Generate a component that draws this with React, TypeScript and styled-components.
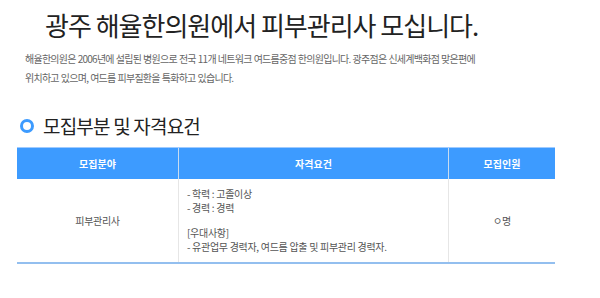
import React from 'react'
import styled, { createGlobalStyle } from 'styled-components'

const BLUE = '#3d9bff'

const GlobalStyle = createGlobalStyle`
  html, body {
    margin: 0;
    padding: 0;
    background: #fff;
  }
  body {
    font-family: "Noto Sans CJK KR", "Noto Sans", sans-serif;
    color: #333;
    overflow: hidden;
  }
`

const Page = styled.div`
  width: 600px;
  padding: 0 47px 0 17px;
  box-sizing: border-box;
`

const Title = styled.h1`
  margin: 0;
  padding: 8px 0 0 28px;
  font-size: 26px;
  font-weight: 400;
  letter-spacing: -1px;
  line-height: 34px;
  color: #222;
`

const Intro = styled.p`
  margin: 7px 0 0 8px;
  font-size: 10px;
  line-height: 19px;
  letter-spacing: -0.75px;
  word-spacing: 0.5px;
  color: #666;
`

const SectionHead = styled.h2`
  display: flex;
  align-items: center;
  gap: 9px;
  margin: 27px 0 0 3px;
  font-size: 19px;
  font-weight: 400;
  letter-spacing: -0.8px;
  line-height: 24px;
  color: #222;
`

const Ring = styled.span`
  width: 8px;
  height: 8px;
  border: 3px solid ${BLUE};
  border-radius: 50%;
`

const Table = styled.table`
  width: 536px;
  margin-top: 9px;
  border-collapse: collapse;
  table-layout: fixed;
  font-size: 10px;
`

const Th = styled.th<{ $w: number }>`
  width: ${p => p.$w}px;
  height: 31px;
  padding: 0;
  background: ${BLUE};
  border-top: 1px solid #9fcbff;
  border-left: 1px solid #c9dcf0;
  color: #fff;
  font-weight: 700;
  text-align: center;
  &:first-child {
    border-left: none;
  }
`

const Td = styled.td<{ $left?: boolean }>`
  height: 83px;
  padding: 0 0 0 ${p => (p.$left ? '8px' : '0')};
  border-left: 1px solid #e6e6e6;
  border-bottom: 2px solid #93bfef;
  text-align: ${p => (p.$left ? 'left' : 'center')};
  color: #555;
  letter-spacing: -0.3px;
  &:first-child {
    border-left: none;
  }
`

const Line = styled.div<{ $gap?: boolean }>`
  line-height: 14.5px;
  margin-top: ${p => (p.$gap ? '10px' : '0')};
`

const NextHead = styled.div`
  margin: 32px 0 0 40px;
  font-size: 13px;
  line-height: 16px;
  color: #444;
`

const columns = [
  { label: '모집분야', width: 161 },
  { label: '자격요건', width: 269 },
  { label: '모집인원', width: 106 },
]

const requirements = [
  { text: '- 학력 : 고졸이상' },
  { text: '- 경력 : 경력' },
  { text: '[우대사항]', gap: true },
  { text: '- 유관업무 경력자, 여드름 압출 및 피부관리 경력자.' },
]

export default function App() {
  return (
    <>
      <GlobalStyle />
      <Page>
        <Title>광주 해율한의원에서 피부관리사 모십니다.</Title>
        <Intro>
          해율한의원은 2006년에 설립된 병원으로 전국 11개 네트워크 여드름중점 한의원입니다. 광주점은 신세계백화점 맞은편에
          <br />
          위치하고 있으며, 여드름 피부질환을 특화하고 있습니다.
        </Intro>

        <SectionHead>
          <Ring />
          모집부분 및 자격요건
        </SectionHead>

        <Table>
          <thead>
            <tr>
              {columns.map(c => (
                <Th key={c.label} $w={c.width}>{c.label}</Th>
              ))}
            </tr>
          </thead>
          <tbody>
            <tr>
              <Td>피부관리사</Td>
              <Td $left>
                {requirements.map(r => (
                  <Line key={r.text} $gap={r.gap}>{r.text}</Line>
                ))}
              </Td>
              <Td>ㅇ명</Td>
            </tr>
          </tbody>
        </Table>

        <NextHead>근무조건 및 복리후생</NextHead>
      </Page>
    </>
  )
}
